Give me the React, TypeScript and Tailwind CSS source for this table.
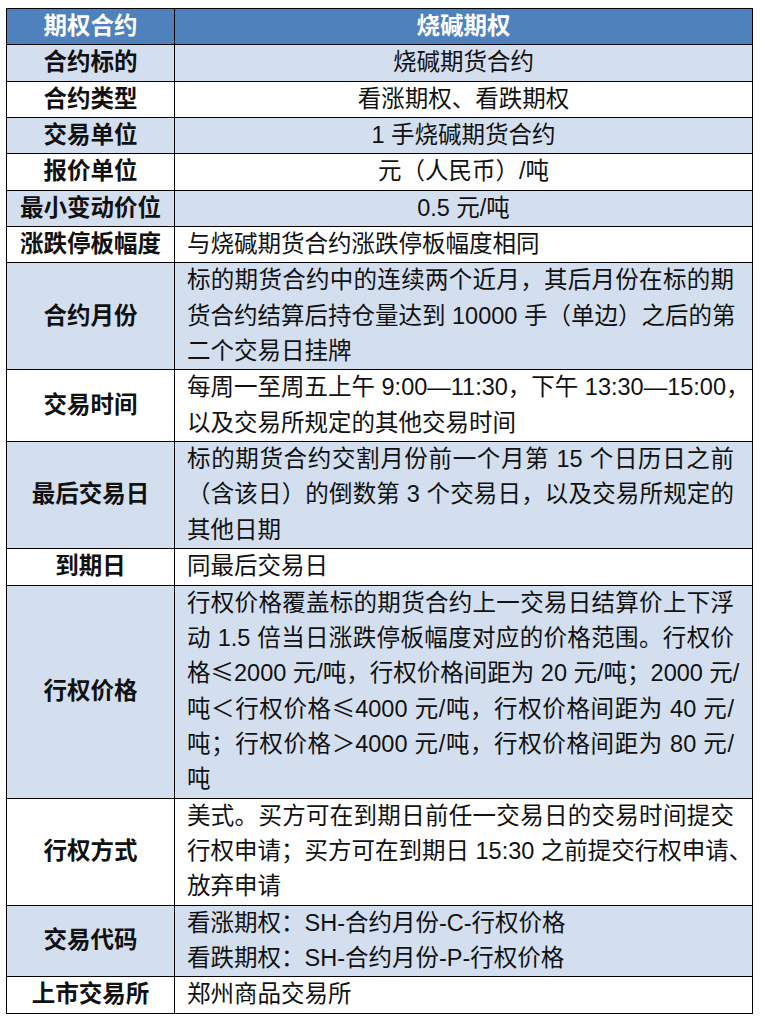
type Row = {
  label: string;
  lines: string[];
  center?: boolean;
  justify?: boolean;
};

const rows: Row[] = [
  { label: '合约标的', lines: ['烧碱期货合约'], center: true },
  { label: '合约类型', lines: ['看涨期权、看跌期权'], center: true },
  { label: '交易单位', lines: ['1 手烧碱期货合约'], center: true },
  { label: '报价单位', lines: ['元（人民币）/吨'], center: true },
  { label: '最小变动价位', lines: ['0.5 元/吨'], center: true },
  { label: '涨跌停板幅度', lines: ['与烧碱期货合约涨跌停板幅度相同'] },
  {
    label: '合约月份',
    justify: true,
    lines: [
      '标的期货合约中的连续两个近月，其后月份在标的期',
      '货合约结算后持仓量达到 10000 手（单边）之后的第',
      '二个交易日挂牌',
    ],
  },
  {
    label: '交易时间',
    justify: true,
    lines: ['每周一至周五上午 9:00—11:30，下午 13:30—15:00，', '以及交易所规定的其他交易时间'],
  },
  {
    label: '最后交易日',
    justify: true,
    lines: [
      '标的期货合约交割月份前一个月第 15 个日历日之前',
      '（含该日）的倒数第 3 个交易日，以及交易所规定的',
      '其他日期',
    ],
  },
  { label: '到期日', lines: ['同最后交易日'] },
  {
    label: '行权价格',
    justify: true,
    lines: [
      '行权价格覆盖标的期货合约上一交易日结算价上下浮',
      '动 1.5 倍当日涨跌停板幅度对应的价格范围。行权价',
      '格≤2000 元/吨，行权价格间距为 20 元/吨；2000 元/',
      '吨＜行权价格≤4000 元/吨，行权价格间距为 40 元/',
      '吨；行权价格＞4000 元/吨，行权价格间距为 80 元/',
      '吨',
    ],
  },
  {
    label: '行权方式',
    justify: true,
    lines: [
      '美式。买方可在到期日前任一交易日的交易时间提交',
      '行权申请；买方可在到期日 15:30 之前提交行权申请、',
      '放弃申请',
    ],
  },
  { label: '交易代码', lines: ['看涨期权：SH-合约月份-C-行权价格', '看跌期权：SH-合约月份-P-行权价格'] },
  { label: '上市交易所', lines: ['郑州商品交易所'] },
];

// ≤ comes out narrow in Liberation Sans, the source uses the full-width CJK glyph
const renderLine = (text: string) =>
  text.split('≤').map((part, k) => (
    <span key={k}>
      {k > 0 && <span className="font-['Noto_Sans_CJK_SC'] leading-none">≤</span>}
      {part}
    </span>
  ));

export default function App() {
  return (
    <div className="min-h-screen bg-white pt-[8px] pl-[6px] font-['Liberation_Sans','Noto_Sans_CJK_SC',sans-serif] text-[23.5px] leading-[35.35px] text-[#111]">
      <table className="w-[747px] border-collapse table-fixed">
        <colgroup>
          <col className="w-[168px]" />
          <col />
        </colgroup>
        <thead>
          <tr className="bg-[#4f81bd] text-white">
            <th className="border border-black p-0 text-center font-bold">期权合约</th>
            <th className="border border-black p-0 text-center font-bold">烧碱期权</th>
          </tr>
        </thead>
        <tbody>
          {rows.map((row, i) => (
            <tr key={row.label} className={i % 2 === 0 ? 'bg-[#d3dfee]' : 'bg-white'}>
              <td className="border border-black p-0 text-center align-middle font-bold whitespace-nowrap">
                {row.label}
              </td>
              <td
                className={
                  row.center
                    ? 'border border-black p-0 text-center align-top whitespace-nowrap'
                    : 'border border-black py-0 pl-3 pr-[18px] align-top whitespace-nowrap'
                }
              >
                {row.lines.map((line, j) => {
                  const last = j === row.lines.length - 1;
                  return (
                    <div
                      key={j}
                      className={row.justify && !last ? 'text-justify [text-align-last:justify]' : ''}
                    >
                      {renderLine(line)}
                    </div>
                  );
                })}
              </td>
            </tr>
          ))}
        </tbody>
      </table>
    </div>
  );
}
